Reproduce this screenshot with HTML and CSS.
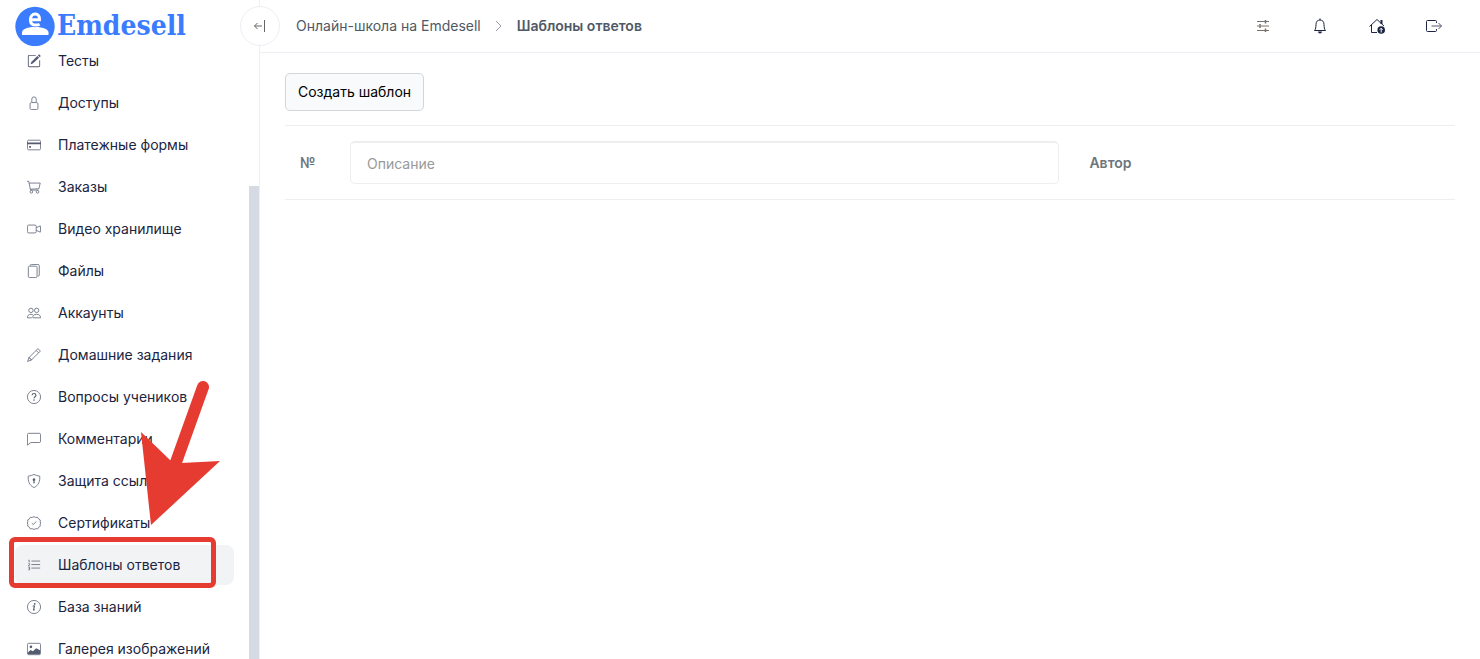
FILE: index.html
```html
<!DOCTYPE html>
<html lang="ru">
  <head>
    <meta charset="utf-8">
    <title>Шаблоны ответов</title>
    <link rel="stylesheet" href="styles.css">
  </head>
  <body>
    <aside class="sidebar">
      <a class="brand" href="#">
        <svg class="brand-logo" viewBox="0 0 40 40">
          <circle cx="20" cy="20.500" r="19.700" fill="#3b7cff"/>
          <path d="M7 29V26.500c0-3 4-5.500 13-5.500s13.500 2.500 13.500 5.500V29z" fill="#fff"/>
          <circle cx="20" cy="13" r="8.300" fill="#3b7cff"/>
          <path d="M15.500 13.800h9c.3-3.700-1.400-5.700-4.300-5.700s-4.800 2.200-4.800 5.600c0 3.600 2.100 5.400 5.400 5.400 1.400 0 2.700-.3 3.800-.9" fill="none" stroke="#fff" stroke-width="3"/>
        </svg>
        <span>Emdesell</span>
      </a>
      <nav class="menu">
        <a href="#"><svg viewBox="0 0 16 16"><path d="M15.500 1.900a.5.5 0 0 1 0 .7l-1 1-2-2 1-1a.5.5 0 0 1 .7 0zM13.800 4.300l-2-2-6.900 6.900-.8 2.500 2.500-.8z"/><path d="M1 2.500A1.500 1.500 0 0 1 2.500 1H10v1H2.500a.5.5 0 0 0-.5.5v11c0 .3.200.5.5.5h11a.5.5 0 0 0 .5-.5V7h1v6.500a1.500 1.500 0 0 1-1.500 1.500h-11A1.500 1.500 0 0 1 1 13.500z"/></svg>Тесты</a>
        <a href="#"><svg viewBox="0 0 16 16"><path class="line" d="M5.500 7V3.500a2.500 2.500 0 0 1 5 0V7M5 7.500h6a1.500 1.500 0 0 1 1.500 1.500v5a1.500 1.500 0 0 1-1.500 1.500H5A1.500 1.500 0 0 1 3.500 14V9A1.500 1.500 0 0 1 5 7.500z"/></svg>Доступы</a>
        <a href="#"><svg viewBox="0 0 16 16"><rect class="line" x=".5" y="2.500" width="15" height="11" rx="1.500"/><path d="M0 5h16v2H0zM2.500 9h2v2h-2z"/></svg>Платежные формы</a>
        <a href="#"><svg viewBox="0 0 16 16"><path class="line" d="M0 1.500h2l2 10h9M2.500 3.500h12.600l-1.500 6.500-9.800.5"/><circle class="line" cx="5" cy="13.500" r="1.500"/><circle class="line" cx="12" cy="13.500" r="1.500"/></svg>Заказы</a>
        <a href="#"><svg viewBox="0 0 16 16"><rect class="line" x=".5" y="3.500" width="10" height="9" rx="1.500"/><path class="line" d="M10.500 6.500 15 4.500c.3-.1.500 0 .5.300v6.400c0 .3-.2.400-.5.300l-4.500-2"/></svg>Видео хранилище</a>
        <a href="#"><svg viewBox="0 0 16 16"><rect class="line" x="1.500" y="2.500" width="10" height="13" rx="1.500"/><path class="line" d="M3.500 2A1.500 1.500 0 0 1 5 .5h7.500A1.500 1.500 0 0 1 14 2v10.500a1.500 1.500 0 0 1-1.500 1.500"/></svg>Файлы</a>
        <a href="#"><svg viewBox="0 0 16 16"><circle class="line" cx="11" cy="5" r="2.500"/><circle class="line" cx="4.500" cy="5" r="2.500"/><path class="line" d="M7 13.500h8.500c0-2.500-1.500-4-4.500-4s-4.500 1.500-4.500 4M5.500 13.500h-5c0-2.500 1-4 4-4 1 0 1.700.2 2.300.5"/></svg>Аккаунты</a>
        <a href="#"><svg viewBox="0 0 16 16"><path class="line" d="m12.500.7 2.800 2.800L5 13.800l-4.300 1.500L2.200 11zM10.500 2.800l2.700 2.700M2.500 10.500v1h1v1h1v1h1"/></svg>Домашние задания</a>
        <a href="#"><svg viewBox="0 0 16 16"><circle class="line" cx="8" cy="8" r="7.500"/><path class="line bold" d="M5.800 6c0-1.300.9-2 2.200-2s2.200.8 2.200 1.900c0 1.800-2.100 1.700-2.100 3.600"/><circle cx="8" cy="11.500" r=".9"/></svg>Вопросы учеников</a>
        <a href="#"><svg viewBox="0 0 16 16"><path class="line" d="M2 1.500h12A1.500 1.500 0 0 1 15.500 3v7.500A1.500 1.500 0 0 1 14 12H4.500L.5 15V3A1.500 1.500 0 0 1 2 1.500z"/></svg>Комментарии</a>
        <a href="#"><svg viewBox="0 0 16 16"><path class="line" d="M8 .5c-1.500.8-4.300 1.500-6.500 1.900-.7 5.800 1.300 10.600 6.500 13.100 5.200-2.500 7.200-7.300 6.500-13.100C12.300 2 9.500 1.300 8 .5z"/><path d="M9.500 6.500a1.500 1.500 0 0 1-1 1.400l.4 2.600H7.100l.4-2.600a1.500 1.500 0 1 1 2-1.400z"/></svg>Защита ссылок</a>
        <a href="#"><svg viewBox="0 0 16 16"><path class="line" d="m8 .7 2 1 2.200-.2 1.100 1.900 1.900 1.200-.2 2.200.6 1.200-.6 1.800.2 1.800-1.900 1.200-1.100 1.900-2.200-.2-2 .9-2-.9-2.200.2-1.100-1.900-1.900-1.200.2-1.800L.4 8 1 6.600.8 4.500l1.900-1.100 1.100-1.900 2.200.2z"/><path class="line" d="m5.500 8.200 1.800 1.600 3.200-3.500"/></svg>Сертификаты</a>
        <a class="active" href="#"><svg viewBox="0 0 16 16"><path class="line" d="M5 3.500h10M5 7.500h10M5 11.500h10M1.500 2.500h1v2.500M1.500 6.500H3v1L1.500 9H3M1.500 10.500H3v3H1.500M2 12h1"/></svg>Шаблоны ответов</a>
        <a href="#"><svg viewBox="0 0 16 16"><circle class="line" cx="8" cy="8" r="7.500"/><path class="line bold" d="M6.500 6.800h2l-1 4.500h1.300"/><circle cx="8.800" cy="4.500" r="1"/></svg>База знаний</a>
        <a href="#"><svg viewBox="0 0 16 16"><rect class="line" x=".5" y="1.500" width="15" height="13" rx="1.500"/><circle cx="4.500" cy="5.500" r="1.500"/><path d="M1 13v-1l3-2.800 2.700 1.500L10.500 7 15 9.500V14H1z"/></svg>Галерея изображений</a>
      </nav>
      <div class="scroll-thumb"></div>
      <svg class="arrow" viewBox="0 0 80 146">
        <path d="M63 7 35 85" stroke="#e63b31" stroke-width="12" stroke-linecap="round"/>
        <path d="M1 52 30 80 41 83 80 81 11 145z" fill="#e63b31"/>
      </svg>
      <div class="highlight"></div>
    </aside>
    <div class="page">
      <header class="topbar">
        <button class="toggle" type="button" aria-label="Свернуть меню">
          <svg viewBox="0 0 16 16"><path d="M10 8H2.500M5.500 5l-3 3 3 3M12.500 2v12"/></svg>
        </button>
        <nav class="breadcrumbs">
          <a href="#">Онлайн-школа на Emdesell</a>
          <svg viewBox="0 0 16 16"><path d="m5 3 5 5-5 5"/></svg>
          <strong>Шаблоны ответов</strong>
        </nav>
        <div class="actions">
          <button type="button" aria-label="Настройки"><svg class="muted" viewBox="0 0 16 16"><path d="M2 3.500h8M11 3.500h3M2 8h2M5 8h9M2 12.500h8M11 12.500h3"/><path d="M10.500 2v3.500M5 6v4M10.500 10.500V14" stroke-width="1.500"/></svg></button>
          <button type="button" aria-label="Уведомления"><svg viewBox="0 0 16 16"><path d="M2.500 12.500c1-1 1.500-3.500 1.500-6C4 3.500 5.700 2 8 2s4 1.500 4 4.500c0 2.500.5 5 1.500 6zM8 .5V2"/><path d="M6 13.500h4a2 2 0 0 1-4 0z" fill="#1b2440" stroke="none"/></svg></button>
          <button type="button" aria-label="Главная"><svg viewBox="0 0 16 16"><path d="M.5 8.500 8 1.500l7 6.500M2.500 7v7.500H8"/><path d="M12.500 2v4" stroke-width="2"/><circle cx="12.200" cy="12" r="3.800" fill="#1b2440" stroke="none"/><path d="M12.200 14.500v-4M10.700 11.700l1.500-1.500 1.500 1.500" stroke="#fff"/></svg></button>
          <button type="button" aria-label="Выйти"><svg viewBox="0 0 16 16"><path d="M10.500 5V3.500c0-.6-.4-1-1-1H1.500c-.6 0-1 .4-1 1v9c0 .6.400 1 1 1h8c.6 0 1-.4 1-1V11"/><path d="M5.500 8h10M12.500 5l3 3-3 3" stroke="#555b70"/></svg></button>
        </div>
      </header>
      <main class="content">
        <button class="create" type="button">Создать шаблон</button>
        <table class="templates">
          <thead>
            <tr>
              <th class="col-number">№</th>
              <th class="col-text"><input type="text" placeholder="Описание" aria-label="Описание"></th>
              <th>Автор</th>
            </tr>
          </thead>
        </table>
      </main>
    </div>
  </body>
</html>
```

FILE: styles.css
```css
* {
  box-sizing: border-box;
}
body {
  margin: 0;
  height: 100vh;
  display: flex;
  overflow: hidden;
  font-family: Inter, "Noto Sans", sans-serif;
  font-size: 14px;
  line-height: 20px;
  color: #1b2440;
  background: #fff;
}
a {
  color: inherit;
  text-decoration: none;
}
button {
  font: inherit;
  cursor: pointer;
}

.sidebar {
  position: relative;
  flex: 0 0 260px;
  overflow: hidden;
  border-right: 1px solid #eeeff5;
}
.brand {
  display: flex;
  align-items: center;
  gap: 2px;
  height: 41px;
  padding: 11px 0 0 15px;
  font-family: "DejaVu Serif Condensed", "DejaVu Serif", serif;
  font-size: 28px;
  line-height: 28px;
  font-weight: bold;
  color: #3b7cff;
}
.brand-logo {
  width: 40px;
  height: 40px;
  flex: none;
}
.menu {
  display: flex;
  flex-direction: column;
  gap: 2px;
  padding: 0 25px 0 15px;
}
.menu a {
  display: flex;
  align-items: center;
  gap: 17px;
  height: 40px;
  flex: none;
  padding: 0 12px;
  border-radius: 8px;
  white-space: nowrap;
}
.menu a.active {
  background: #f2f3f5;
}
.menu svg {
  width: 14px;
  height: 14px;
  flex: none;
  fill: #555b70;
}
.menu .line {
  fill: none;
  stroke: #6c7182;
}
.menu .bold {
  stroke: #555b70;
  stroke-width: 1.3;
}
.scroll-thumb {
  position: absolute;
  top: 186px;
  right: 0;
  bottom: 0;
  width: 10px;
  background: #d6dae3;
}

/* pointer and frame over the current menu item */
.arrow {
  position: absolute;
  top: 380px;
  left: 140px;
  width: 80px;
  height: 146px;
}
.highlight {
  position: absolute;
  top: 537px;
  left: 9px;
  width: 207px;
  height: 51px;
  border: 5px solid #e63b31;
  border-radius: 6px;
}

.page {
  flex: 1;
  min-width: 0;
}
.topbar {
  position: relative;
  display: flex;
  align-items: center;
  justify-content: space-between;
  height: 53px;
  padding: 0 26px 0 36px;
  border-bottom: 1px solid #eeeff5;
}
.topbar svg {
  width: 16px;
  height: 16px;
  fill: none;
  stroke: #1b2440;
}
.toggle {
  position: absolute;
  top: 6px;
  left: -20px;
  width: 40px;
  height: 40px;
  display: flex;
  align-items: center;
  justify-content: center;
  padding: 0;
  border: 1px solid #eeeff5;
  border-radius: 50%;
  background: #fff;
}
.topbar .toggle svg {
  stroke: #666;
}
.breadcrumbs {
  display: flex;
  align-items: center;
  gap: 10px;
  color: #4f5965;
}
.topbar .breadcrumbs svg {
  stroke: #9a9ead;
}
.breadcrumbs strong {
  font-weight: 600;
}
.actions {
  display: flex;
  gap: 17px;
}
.actions button {
  width: 40px;
  height: 40px;
  display: flex;
  align-items: center;
  justify-content: center;
  padding: 0;
  border: 0;
  background: none;
}
.topbar .muted {
  stroke: #77716c;
}

.content {
  padding: 20px 25px;
}
.create {
  display: block;
  height: 38px;
  padding: 0 12px;
  border: 1px solid #d3d5d8;
  border-radius: 5px;
  background: #f9fafc;
  color: #000;
}
.templates {
  width: 100%;
  margin-top: 14px;
  table-layout: fixed;
  border-collapse: collapse;
  border-top: 1px solid #eee;
  border-bottom: 1px solid #eee;
}
.templates th {
  padding: 15px;
  text-align: left;
  font-weight: 600;
  color: #6c757d;
}
.templates .col-number {
  width: 50px;
}
.templates .col-text {
  width: 63.2%;
}
.templates input {
  display: block;
  width: 100%;
  height: 43px;
  padding: 0 16px;
  border: 1px solid #eeeef1;
  border-top: 2px solid #eee;
  border-radius: 5px;
  font: inherit;
  font-weight: 400;
}
.templates input::placeholder {
  color: #999;
}
```
